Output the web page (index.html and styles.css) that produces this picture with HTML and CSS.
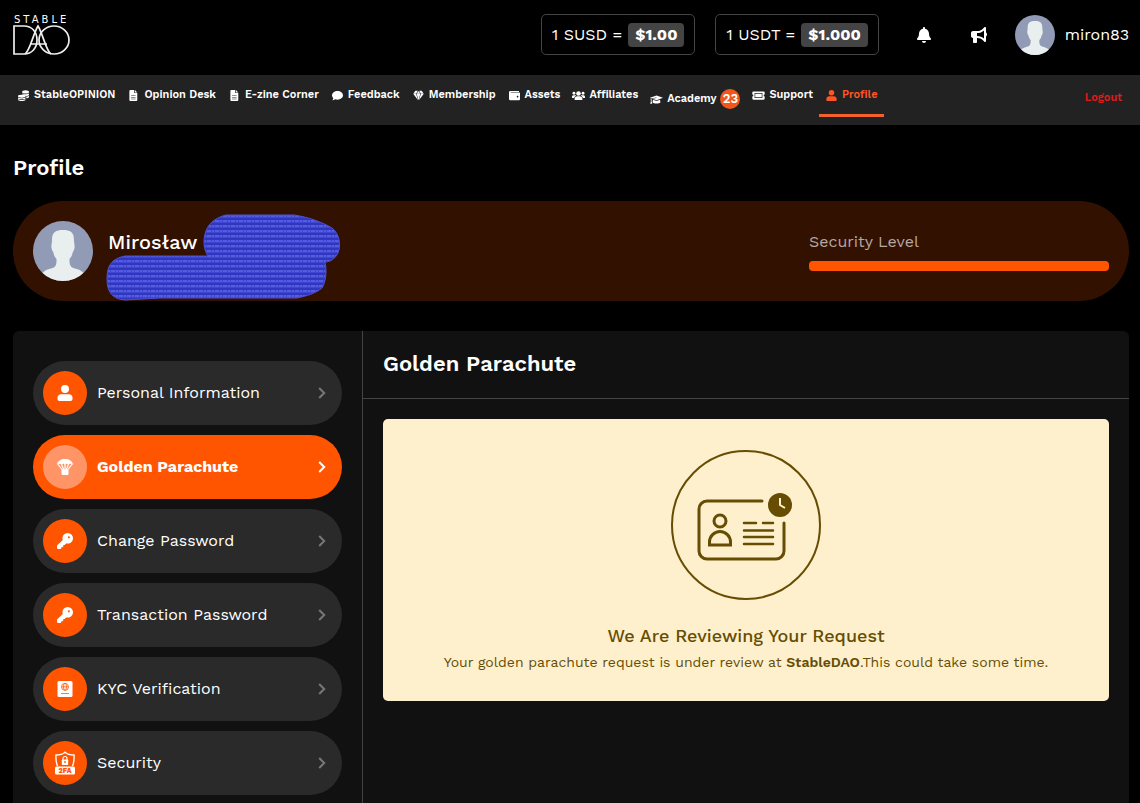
FILE: index.html
```html
<!DOCTYPE html>
<html lang="en">
<head>
  <meta charset="UTF-8">
  <meta name="viewport" content="width=device-width, initial-scale=1.0">
  <title>Profile - StableDAO</title>
  <link rel="stylesheet" href="styles.css">
</head>
<body>

  <!-- Icon sprite -->
  <svg class="sprite" width="0" height="0" aria-hidden="true">
    <symbol id="i-coins" viewBox="0 0 16 16">
      <ellipse cx="11" cy="2.8" rx="5" ry="2.4"/>
      <path d="M6 5c2 1.400 8 1.400 10 0v2.300c-1 1.200-3 1.500-5 1.400C10 7.200 8 6.600 6 6.500zM12 9.400c1.500 0 3-.3 4-1.200v2.400c-.8 1-2.500 1.500-4 1.500z"/>
      <ellipse cx="5.500" cy="9" rx="5.500" ry="2.100"/>
      <path d="M0 10.900c2 1.300 9 1.300 11 0v1.400c-2 1.700-9 1.700-11 0zM0 13.300c2 1.500 9 1.500 11 0v1.200c-2 2-9 2-11 0z"/>
    </symbol>
    <symbol id="i-file" viewBox="0 0 16 16">
      <path fill-rule="evenodd" d="M3.500 0H9v4.500h4.500v10A1.500 1.500 0 0 1 12 16H3.500A1.500 1.500 0 0 1 2 14.500v-13A1.500 1.500 0 0 1 3.500 0zM10 0l3.500 3.500H10zM4.500 8v.8h6.500V8zm0 2.400v.8h6.500v-.8zm0 2.400v.8h6.500v-.8z"/>
    </symbol>
    <symbol id="i-comment" viewBox="0 0 16 16">
      <path d="M8 1.500c4.400 0 8 2.800 8 6.300s-3.600 6.300-8 6.300c-1.200 0-2.400-.2-3.400-.6C3.500 14.400 2 15 .5 15c.8-1 1.300-2 1.400-3C.7 10.900 0 9.400 0 7.800c0-3.500 3.600-6.300 8-6.300z"/>
    </symbol>
    <symbol id="i-gem" viewBox="0 0 16 16">
      <path d="M3.500 1H7L4.700 5H.5zM9 1h3.500l3 4h-4.200zM8 1.300L10.500 5h-5zM.3 5.600h4.200l2.900 9.200zM5.300 5.600h5.400L8 15zM11.500 5.600h4.200l-7.100 9.200z"/>
    </symbol>
    <symbol id="i-wallet" viewBox="0 0 16 16">
      <path fill-rule="evenodd" d="M2 1.500h12.500V3H2.500v.7H15a1 1 0 0 1 1 1v8.800a1.500 1.500 0 0 1-1.500 1.500H2a2 2 0 0 1-2-2v-9.500a2 2 0 0 1 2-2zM12.500 8.500a1.200 1.200 0 1 0 .01 0z"/>
    </symbol>
    <symbol id="i-users" viewBox="0 0 20 16">
      <circle cx="10" cy="5" r="3.500"/><circle cx="3" cy="4.500" r="2.200"/><circle cx="17" cy="4.500" r="2.200"/>
      <path d="M4 15v-2c0-2.500 2-4 4-4h4c2 0 4 1.500 4 4v2zM0 12v-2c0-1.500 1-2.500 2.500-2.500H5c.7 0 1 .2 1.500.7C4.500 9 3.500 10.500 3.200 12zM20 12v-2c0-1.500-1-2.500-2.500-2.500H15c-.7 0-1 .2-1.500.7 2 .8 3 2.300 3.300 3.800z"/>
    </symbol>
    <symbol id="i-cap" viewBox="0 0 20 16">
      <path d="M10 2l10 3.300L10 9 3.500 6.700l6.500-.9-.1-.8-8.400 1.300L0 5.300zM1 7l1.500.6V11l1 3.500H.3L1.300 11zM4.500 8.500L10 10.400l5.500-1.900.5 4c-2 2-10 2-12 0z"/>
    </symbol>
    <symbol id="i-ticket" viewBox="0 0 18 16">
      <path fill-rule="evenodd" d="M1.500 2h15A1.500 1.500 0 0 1 18 3.500v3a1.500 1.500 0 0 0 0 3v3a1.500 1.500 0 0 1-1.500 1.500h-15A1.500 1.500 0 0 1 0 12.500v-3a1.500 1.500 0 0 0 0-3v-3A1.500 1.500 0 0 1 1.500 2zM3.300 4.500v7h11.400v-7zM4.300 5.500h9.400v5H4.300z"/>
    </symbol>
    <symbol id="i-user" viewBox="0 0 16 16">
      <circle cx="8" cy="4" r="4"/>
      <path d="M5 9h6a4.500 4.500 0 0 1 4.500 4.500v1A1.500 1.500 0 0 1 14 16H2a1.500 1.500 0 0 1-1.500-1.500v-1A4.500 4.500 0 0 1 5 9z"/>
    </symbol>
    <symbol id="i-bell" viewBox="0 0 448 512">
      <path d="M224 512c35.320 0 63.970-28.650 63.970-64H160.030c0 35.350 28.650 64 63.970 64zm215.390-149.710c-19.320-20.760-55.470-51.990-55.470-154.290 0-77.700-54.480-139.900-127.940-155.160V32c0-17.670-14.320-32-31.980-32s-31.980 14.330-31.980 32v20.840C118.560 68.100 64.080 130.300 64.080 208c0 102.300-36.150 133.530-55.470 154.290-6 6.450-8.660 14.160-8.610 21.710.11 16.400 12.980 32 32.100 32h383.800c19.120 0 32-15.600 32.100-32 .05-7.550-2.610-15.270-8.610-21.710z"/>
    </symbol>
    <symbol id="i-bullhorn" viewBox="0 0 512 512">
      <path d="M480 32c0-12.900-7.800-24.600-19.800-29.600s-25.700-2.200-34.900 6.900L381.700 53c-48 48-113.100 75-181 75H64c-35.300 0-64 28.700-64 64v96c0 35.300 28.700 64 64 64v128c0 17.700 14.300 32 32 32h64c17.700 0 32-14.300 32-32V352h8.700c67.900 0 133 27 181 75l43.600 43.600c9.200 9.200 22.900 11.900 34.900 6.900s19.800-16.600 19.800-29.600V300.400c18.600-8.800 32-32.500 32-60.400s-13.400-51.600-32-60.400V32zm-64 76.700v262.600C357.200 317.800 280.500 288 200.700 288H192v-96h8.700c79.800 0 156.500-29.800 215.300-83.300z"/>
    </symbol>
    <symbol id="i-avatar" viewBox="0 0 60 60">
      <rect width="60" height="60" fill="#929bb5"/>
      <path fill="#e9eeef" d="M19 19c0-8 4-10 11-10s11 2 11 10c0 4 1 5 .5 8s-1.500 3-2 5c-.5 3-1.500 4-3 6 0 4 0 6 2 8 3 2 9 2 12 6l-4 10H14L9.500 52c3-4 9-4 12-6 2-2 2-4 2-8-1.500-2-2.500-3-3-6-.5-2-1.500-2-2-5s.5-4 .5-8z"/>
    </symbol>
    <symbol id="i-person" viewBox="0 0 16 16">
      <circle cx="8" cy="4" r="4"/>
      <path d="M4 9.200h8c2 0 3.500 1.400 3.500 3.400V14c0 1.200-.8 2-2 2h-11c-1.200 0-2-.8-2-2v-1.400c0-2 1.500-3.400 3.500-3.400z"/>
    </symbol>
    <symbol id="i-parachute" viewBox="0 0 16 16">
      <path d="M0 5.500C.5 2 4 0 8 0s7.500 2 8 5.500c-1.500-1-3.300-1-4.300 0-1-1-2.700-1-3.700 0-1-1-2.700-1-3.700 0-1-1-2.800-1-4.300 0z"/>
      <path fill="none" stroke="currentColor" stroke-width="1.200" d="M.8 5l5 6.500M15.200 5l-5 6.500M4.500 5l2.300 6M11.500 5l-2.300 6M8 4v7"/>
      <rect x="4.500" y="10.500" width="7" height="5.500" rx="1"/>
    </symbol>
    <symbol id="i-key" viewBox="0 0 16 16">
      <path fill-rule="evenodd" d="M10.700 0A5.300 5.300 0 0 1 16 5.300c0 3-2.400 5.300-5.300 5.300-.6 0-1.100-.1-1.600-.2L7.600 12H6.300v1.400l-1 .9H4.300v.9l-.7.8H1a1 1 0 0 1-1-1v-2.500l5.800-5.400c-.3-.6-.4-1.200-.4-1.800A5.300 5.300 0 0 1 10.700 0zM11.900 3.200a1 1 0 1 0 .01 0z"/>
    </symbol>
    <symbol id="i-passport" viewBox="0 0 16 16">
      <rect x=".5" width="15" height="16" rx="1.500"/>
      <g fill="none" stroke="#ff5500" stroke-width=".8"><circle cx="8" cy="5.800" r="3.500"/><ellipse cx="8" cy="5.800" rx="1.500" ry="3.500"/><path d="M4.500 5.800h7M4 12.500h8"/></g>
    </symbol>
    <symbol id="i-chevron" viewBox="0 0 8 12">
      <path fill="none" stroke="currentColor" stroke-width="2" d="M1.200 1l5 5-5 5"/>
    </symbol>
  </svg>

  <header class="topbar">
    <a class="logo" href="#" aria-label="Stable DAO">
      <svg width="58" height="44" viewBox="0 0 58 44">
        <text class="logo-text" x="1" y="10">STABLE</text>
        <g fill="none" stroke="#eee" stroke-width="1.700">
          <path d="M1 13v28h10c8 0 13-6 13-14S19 13 11 13z"/>
          <path d="M12 41c5-3 8-20 13-28 5 8 8 25 13 28M17 31h17"/>
          <ellipse cx="41" cy="27" rx="15" ry="14"/>
        </g>
      </svg>
    </a>
    <div class="topbar-right">
      <div class="rate">1 SUSD = <strong>$1.00</strong></div>
      <div class="rate">1 USDT = <strong>$1.000</strong></div>
      <button class="icon-btn" type="button" aria-label="Notifications"><svg width="14" height="16"><use href="#i-bell"/></svg></button>
      <button class="icon-btn" type="button" aria-label="Announcements"><svg width="18" height="16"><use href="#i-bullhorn"/></svg></button>
      <a class="account" href="#">
        <svg class="avatar" width="40" height="40"><use href="#i-avatar"/></svg>
        <span>miron83</span>
      </a>
    </div>
  </header>

  <nav class="navbar">
    <ul class="nav-list">
      <li><a href="#"><svg><use href="#i-coins"/></svg>StableOPINION</a></li>
      <li><a href="#"><svg><use href="#i-file"/></svg>Opinion Desk</a></li>
      <li><a href="#"><svg><use href="#i-file"/></svg>E-zine Corner</a></li>
      <li><a href="#"><svg><use href="#i-comment"/></svg>Feedback</a></li>
      <li><a href="#"><svg><use href="#i-gem"/></svg>Membership</a></li>
      <li><a href="#"><svg><use href="#i-wallet"/></svg>Assets</a></li>
      <li><a href="#"><svg><use href="#i-users"/></svg>Affiliates</a></li>
      <li><a href="#"><svg><use href="#i-cap"/></svg>Academy <span class="badge">23</span></a></li>
      <li><a href="#"><svg><use href="#i-ticket"/></svg>Support</a></li>
      <li class="active"><a href="#"><svg><use href="#i-user"/></svg>Profile</a></li>
    </ul>
    <a class="logout" href="#">Logout</a>
  </nav>

  <main class="content">
    <h1>Profile</h1>

    <section class="profile-card">
      <svg class="avatar" width="60" height="60"><use href="#i-avatar"/></svg>
      <div class="profile-name">Mirosław</div>
      <svg class="scribble" width="236" height="88" viewBox="0 0 236 88" aria-hidden="true">
        <defs>
          <pattern id="strokes" width="8" height="5" patternUnits="userSpaceOnUse">
            <rect width="8" height="5" fill="#3d45d2"/>
            <path d="M0 1h8" stroke="#2228a8" stroke-width="1"/>
            <path d="M0 3h8" stroke="#6a72ee" stroke-width="1" stroke-dasharray="2 1"/>
          </pattern>
        </defs>
        <path fill="url(#strokes)" stroke="#4a50d6" stroke-width="1" d="M121 2h68c14 2 28 7 38 13 8 6 9 18 6 25-3 6-8 9-13 9 2 8 1 20-3 26-6 5-15 8-25 10H55l-35 2C8 86 2 80 2 66c0-13 4-20 18-23h83c-4-6-5-14-3-22 2-9 9-16 21-19z"/>
      </svg>
      <div class="security-level">
        <label for="level">Security Level</label>
        <progress id="level" value="100" max="100"></progress>
      </div>
    </section>

    <div class="panel">
      <aside class="side-menu">
        <a class="menu-item" href="#"><span class="menu-icon"><svg><use href="#i-person"/></svg></span>Personal Information<svg class="chevron"><use href="#i-chevron"/></svg></a>
        <a class="menu-item selected" href="#"><span class="menu-icon"><svg><use href="#i-parachute"/></svg></span>Golden Parachute<svg class="chevron"><use href="#i-chevron"/></svg></a>
        <a class="menu-item" href="#"><span class="menu-icon"><svg><use href="#i-key"/></svg></span>Change Password<svg class="chevron"><use href="#i-chevron"/></svg></a>
        <a class="menu-item" href="#"><span class="menu-icon"><svg><use href="#i-key"/></svg></span>Transaction Password<svg class="chevron"><use href="#i-chevron"/></svg></a>
        <a class="menu-item" href="#"><span class="menu-icon"><svg><use href="#i-passport"/></svg></span>KYC Verification<svg class="chevron"><use href="#i-chevron"/></svg></a>
        <a class="menu-item" href="#">
          <span class="menu-icon">
            <svg class="large" viewBox="0 0 20 24">
              <path fill="none" stroke="currentColor" stroke-width="1.400" d="M2.500 15c-1.200-3-1.800-7-1.500-11 3.500 0 7-1 9-2.800C12 3 15.500 4 19 4c.3 4-.3 8-1.500 11"/>
              <path fill="none" stroke="currentColor" stroke-width="1.200" d="M8 9V7.500a2 2 0 0 1 4 0V9"/>
              <rect x="6.800" y="8.500" width="6.400" height="5.500" rx=".8"/>
              <circle cx="10" cy="11" r=".9" fill="#ff5500"/>
              <rect y="15.500" width="20" height="8" rx="1.500"/>
              <text class="shield-text" x="10" y="22" text-anchor="middle">2FA</text>
            </svg>
          </span>Security<svg class="chevron"><use href="#i-chevron"/></svg>
        </a>
      </aside>

      <section class="panel-body">
        <h2>Golden Parachute</h2>
        <div class="review-box">
          <svg class="review-icon" width="150" height="150" viewBox="0 0 150 150" aria-hidden="true">
            <circle cx="75" cy="75" r="74" stroke-width="2"/>
            <g stroke-width="3" stroke-linecap="round">
              <path d="M91 51H36a8 8 0 0 0-8 8v42a8 8 0 0 0 8 8h69a8 8 0 0 0 8-8V73"/>
              <circle cx="49" cy="71" r="6"/>
              <path d="M38.500 95v-3a10.500 10.500 0 0 1 21 0v3z"/>
              <path stroke-width="2.500" d="M73 73h12M92 73h10M73 80.500h29M73 87h29M73 94h29"/>
            </g>
            <circle class="clock" cx="109" cy="55" r="12"/>
            <path class="hands" stroke-width="2" d="M109 48v7l5 3"/>
          </svg>
          <h3>We Are Reviewing Your Request</h3>
          <p>Your golden parachute request is under review at <strong>StableDAO</strong>.This could take some time.</p>
        </div>
      </section>
    </div>
  </main>

</body>
</html>
```
FILE: styles.css
```css
/* General */
* {
  box-sizing: border-box;
}

body {
  font-family: "Work Sans", Inter, sans-serif;
  font-size: 16px;
  line-height: 24px;
  color: #fff;
  background-color: #000;
  margin: 0;
  min-height: 100vh;
  display: flex;
  flex-direction: column;
}

h1, h2, h3, p, ul {
  margin: 0;
  padding: 0;
}

a {
  color: inherit;
  text-decoration: none;
}

svg {
  fill: currentColor;
  flex-shrink: 0;
}

.sprite {
  position: absolute;
}

.avatar {
  display: block;
  border-radius: 50%;
}

/* Top bar */
.topbar {
  display: flex;
  align-items: center;
  justify-content: space-between;
  min-height: 75px;
  padding: 0 11px 0 13px;
}

.logo svg {
  display: block;
  margin-bottom: 6px;
}

.logo-text {
  font-family: "DejaVu Sans", sans-serif;
  font-size: 10px;
  letter-spacing: 3px;
}

.topbar-right {
  display: flex;
  align-items: center;
  gap: 20px;
  margin-bottom: 6px;
}

.rate {
  display: flex;
  align-items: center;
  gap: 6px;
  height: 41px;
  padding: 0 10px;
  border: 1px solid #444;
  border-radius: 5px;
}

.rate strong {
  padding: 0 7px;
  background-color: #444;
  border-radius: 4px;
  font-weight: 700;
}

.icon-btn {
  display: flex;
  align-items: center;
  justify-content: center;
  width: 35px;
  height: 40px;
  padding: 0;
  border: none;
  background: none;
  color: #fff;
  cursor: pointer;
}

.icon-btn:first-of-type {
  margin-left: 8px;
}

.account {
  display: flex;
  align-items: center;
  gap: 10px;
  margin-left: -2px;
}

/* Navigation */
.navbar {
  display: flex;
  justify-content: space-between;
  min-height: 50px;
  padding: 0 12px 0 11px;
  background-color: #222;
  font-size: 11px;
  font-weight: 600;
}

.nav-list {
  display: flex;
  align-items: flex-start;
  list-style: none;
}

.nav-list a {
  display: flex;
  align-items: center;
  gap: 4px;
  padding: 13px 6px 12px;
  line-height: 14px;
  border-bottom: 3px solid transparent;
}

.nav-list svg {
  width: 13px;
  height: 11px;
}

.nav-list .active a {
  color: #ff5525;
  border-bottom-color: #f2602c;
}

.badge {
  width: 20px;
  height: 20px;
  margin: 1px 0;
  border-radius: 50%;
  background-color: #f2561d;
  font-size: 13px;
  line-height: 20px;
  text-align: center;
}

.logout {
  padding: 11px 6px;
  color: #e01b1b;
}

/* Page content */
.content {
  flex: 1;
  display: flex;
  flex-direction: column;
  padding: 0 11px 0 13px;
}

h1, h2 {
  font-size: 22px;
  font-weight: 600;
  line-height: 26px;
}

h1 {
  margin: 30px 0 20px;
}

/* Profile card */
.profile-card {
  position: relative;
  display: flex;
  align-items: center;
  gap: 15px;
  min-height: 100px;
  padding: 0 20px;
  margin-bottom: 30px;
  border-radius: 50px;
  background-color: #331100;
}

.profile-name {
  font-size: 20px;
  font-weight: 500;
  padding-bottom: 18px;
}

/* Hand-drawn marker over the personal data */
.scribble {
  position: absolute;
  left: 92px;
  top: 12px;
}

.security-level {
  width: 300px;
  margin-left: auto;
  padding-bottom: 2px;
}

.security-level label {
  display: block;
  margin: 0 0 7px;
  color: #b7a8a2;
}

.security-level progress {
  display: block;
  width: 100%;
  height: 10px;
  appearance: none;
  border: none;
}

progress::-webkit-progress-bar {
  background-color: #222;
  border-radius: 4px;
}

progress::-webkit-progress-value {
  background-color: #ff5500;
  border-radius: 4px;
}

/* Panel */
.panel {
  flex: 1;
  display: flex;
  background-color: #111;
  border-radius: 6px 6px 0 0;
}

.side-menu {
  flex: 0 0 350px;
  display: flex;
  flex-direction: column;
  gap: 10px;
  padding: 30px 20px 8px;
  border-right: 1px solid #444;
}

.menu-item {
  display: flex;
  align-items: center;
  gap: 10px;
  padding: 10px 16px 10px 10px;
  border-radius: 32px;
  background-color: #2a2a2a;
}

.menu-icon {
  display: flex;
  align-items: center;
  justify-content: center;
  width: 44px;
  height: 44px;
  border-radius: 50%;
  background-color: #ff5500;
}

.menu-icon svg {
  width: 16px;
  height: 16px;
}

.menu-icon svg.large {
  width: 20px;
  height: 24px;
}

.shield-text {
  fill: #ff5500;
  font-size: 7px;
  font-weight: 800;
}

.chevron {
  width: 8px;
  height: 12px;
  margin-left: auto;
  color: #777;
}

.menu-item.selected {
  background-color: #ff5500;
  font-weight: 700;
}

.selected .menu-icon {
  background-color: #ff9466;
}

.selected .chevron {
  color: #fff;
}

.panel-body {
  flex: 1;
}

.panel-body h2 {
  padding: 20px 20px 21px;
  border-bottom: 1px solid #444;
}

.review-box {
  display: flex;
  flex-direction: column;
  align-items: center;
  margin: 20px;
  padding: 31px 20px 24px;
  border-radius: 5px;
  background-color: #fef0cd;
  color: #664d03;
  text-align: center;
}

.review-icon {
  fill: none;
  stroke: currentColor;
  margin-bottom: 24px;
}

.review-icon .clock {
  fill: currentColor;
  stroke: none;
}

.review-icon .hands {
  stroke: #fef0cd;
}

.review-box h3 {
  font-size: 18px;
  font-weight: 500;
}

.review-box p {
  font-size: 14px;
  line-height: 29px;
}

.review-box strong {
  font-weight: 600;
}
```
